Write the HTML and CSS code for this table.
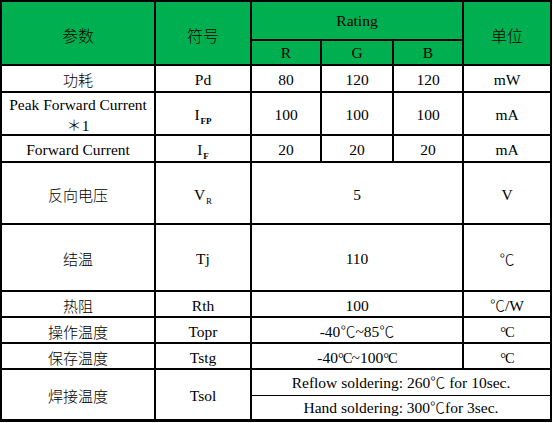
FILE: index.html
```html
<!DOCTYPE html>
<html lang="zh">
<head>
<meta charset="utf-8">
<title>Rating</title>
<link rel="stylesheet" href="styles.css">
</head>
<body>
<div class="sheet">
  <div class="cell head c1 r12"><span class="t zh">参数</span></div>
  <div class="cell head c2 r12"><span class="t zh">符号</span></div>
  <div class="cell head c345"><span class="t">Rating</span></div>
  <div class="cell head c6 r12"><span class="t zh">单位</span></div>
  <div class="cell head"><span class="t">R</span></div>
  <div class="cell head"><span class="t">G</span></div>
  <div class="cell head"><span class="t">B</span></div>

  <div class="cell"><span class="t zh">功耗</span></div>
  <div class="cell"><span class="t">Pd</span></div>
  <div class="cell"><span class="t">80</span></div>
  <div class="cell"><span class="t">120</span></div>
  <div class="cell"><span class="t">120</span></div>
  <div class="cell"><span class="t">mW</span></div>

  <div class="cell"><span class="t two">Peak Forward Current<br><span class="zh">＊</span>1</span></div>
  <div class="cell"><span class="t">I<sub class="sb bold">FP</sub></span></div>
  <div class="cell"><span class="t">100</span></div>
  <div class="cell"><span class="t">100</span></div>
  <div class="cell"><span class="t">100</span></div>
  <div class="cell"><span class="t">mA</span></div>

  <div class="cell"><span class="t">Forward Current</span></div>
  <div class="cell"><span class="t">I<sub class="sb bold">F</sub></span></div>
  <div class="cell"><span class="t">20</span></div>
  <div class="cell"><span class="t">20</span></div>
  <div class="cell"><span class="t">20</span></div>
  <div class="cell"><span class="t">mA</span></div>

  <div class="cell"><span class="t zh">反向电压</span></div>
  <div class="cell"><span class="t">V<sub class="sb">R</sub></span></div>
  <div class="cell c345"><span class="t">5</span></div>
  <div class="cell"><span class="t">V</span></div>

  <div class="cell"><span class="t zh">结温</span></div>
  <div class="cell"><span class="t">Tj</span></div>
  <div class="cell c345"><span class="t">110</span></div>
  <div class="cell"><span class="t zh">℃</span></div>

  <div class="cell"><span class="t zh">热阻</span></div>
  <div class="cell"><span class="t">Rth</span></div>
  <div class="cell c345"><span class="t">100</span></div>
  <div class="cell"><span class="t"><span class="zh">℃</span>/W</span></div>

  <div class="cell"><span class="t zh">操作温度</span></div>
  <div class="cell"><span class="t">Topr</span></div>
  <div class="cell c345"><span class="t">-40<span class="zh">℃</span>~85<span class="zh">℃</span></span></div>
  <div class="cell"><span class="t deg">°C</span></div>

  <div class="cell"><span class="t zh">保存温度</span></div>
  <div class="cell"><span class="t">Tstg</span></div>
  <div class="cell c345"><span class="t">-40<span class="deg">°C</span>~100<span class="deg">°C</span></span></div>
  <div class="cell"><span class="t deg">°C</span></div>

  <div class="cell"><span class="t zh">焊接温度</span></div>
  <div class="cell"><span class="t">Tsol</span></div>
  <div class="split c3456">
    <div class="sub"><span class="t">Reflow soldering: 260<span class="zh">℃</span> for 10sec.</span></div>
    <div class="sub"><span class="t">Hand soldering: 300<span class="zh">℃</span>for 3sec.</span></div>
  </div>
</div>
</body>
</html>
```

FILE: styles.css
```css
html, body {
  margin: 0;
  padding: 0;
  background: #ffffff;
}

.sheet {
  width: 552px;
  box-sizing: border-box;
  padding: 2px 2px 3px 2px;
  background: #000000;
  display: grid;
  grid-template-columns: 152px 94px 68px 70px 68px 86px;
  grid-template-rows: 37px 23px 25px 41px 25px 60px 65px 24px 24px 24px 49px;
  gap: 2px;
  font-family: "Liberation Serif", "DejaVu Serif", serif;
  font-size: 15.5px;
  color: #000;
}

.cell {
  background: #ffffff;
  display: flex;
  align-items: center;
  justify-content: center;
  padding-top: 3px;
}

.t {
  display: block;
  text-align: center;
  white-space: nowrap;
  line-height: 18px;
}

.head {
  background: #00b050;
  padding-top: 0;
}

.r12 { grid-row: span 2; }
.c345 { grid-column: span 3; }
.c3456 { grid-column: span 4; }

.zh {
  font-family: "Noto Sans CJK SC", sans-serif;
  font-size: 15px;
  font-weight: 300;
}

.head .zh {
  font-size: 16px;
  padding-top: 3px;
}

.two {
  line-height: 20px;
}

.sb {
  font-size: 9px;
  vertical-align: -4px;
  line-height: 0;
  margin-left: 1px;
}

.bold { font-weight: bold; }

.deg {
  font-size: 14.5px;
  letter-spacing: -1px;
}

.split {
  display: flex;
  flex-direction: column;
  background: #000;
  gap: 1px;
}

.sub {
  background: #ffffff;
  display: flex;
  align-items: center;
  justify-content: center;
  height: 25px;
}

.sub + .sub {
  height: 23px;
}
```
